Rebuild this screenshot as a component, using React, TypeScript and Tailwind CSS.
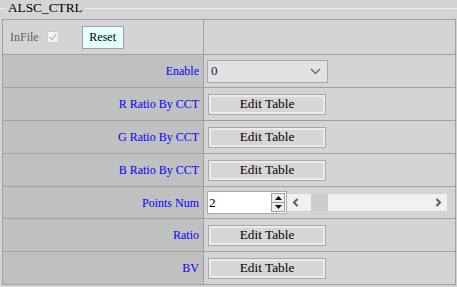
import React from "react";

const F = "font-['Liberation_Serif','Times_New_Roman',serif]";

function EditBtn() {
  return (
    <div className={`${F} w-[118px] h-[21px] border border-[#a9a9a9] bg-[#d6d6d6] shadow-[inset_0_0_0_2px_#ebebeb] flex items-center justify-center text-[13.3px] text-black leading-none`}>
      Edit Table
    </div>
  );
}

function Row({ label, h, children }: { label: string; h: string; children: React.ReactNode }) {
  return (
    <div className={`flex ${h}`}>
      <div className={`${F} w-[201px] shrink-0 border-r border-b border-[#a0a0a0] bg-[#c0c0c0] flex items-center justify-end pr-[4px] text-[12px] text-[#0000ff]`}>
        {label}
      </div>
      <div className="flex-1 border-r border-b border-[#a0a0a0] bg-[#d4d4d4] flex items-center pl-[4px]">
        {children}
      </div>
    </div>
  );
}

export default function App() {
  return (
    <div className={`${F} w-[457px] h-[287px] bg-[#d4d4d4] overflow-hidden`}>
      <div className="flex h-[19px] items-start">
        <div className="w-[6px] h-px mt-[8px] bg-[#ececec]" />
        <div className={`${F} px-[2px] text-[13.3px] leading-[16px] text-black`}>ALSC_CTRL</div>
        <div className="flex-1 h-px mt-[8px] bg-[#ececec]" />
      </div>
      <div className="ml-[2px] mr-[1px] border-l border-t border-[#a0a0a0]">
        <div className="flex h-[35px]">
          <div className="w-[201px] shrink-0 border-r border-b border-[#a0a0a0] bg-[#d4d4d4] flex items-center pl-[7px]">
            <span className={`${F} text-[12px] text-[#606060]`}>InFile</span>
            <span className="ml-[8px] w-[12px] h-[12px] border border-[#cfcfcf] bg-[#f4f4f4] flex items-center justify-center">
              <svg width="10" height="10" viewBox="0 0 10 10">
                <polyline points="1.5,5 4,7.5 8.5,2" fill="none" stroke="#b8b8b8" strokeWidth="1.3" />
              </svg>
            </span>
            <div className={`${F} ml-[23px] w-[42px] h-[23px] border border-[#a0a0a0] bg-[#e0ffff] shadow-[inset_0_0_0_1px_#f6f6f6] flex items-center justify-center text-[12px] text-black`}>
              Reset
            </div>
          </div>
          <div className="flex-1 border-r border-b border-[#a0a0a0] bg-[#d4d4d4]" />
        </div>
        <Row label="Enable" h="h-[33px]">
          <div className="-ml-[1px] w-[121px] h-[23px] border border-[#a8a8a8] bg-[#e2e2e2] flex items-center justify-between pl-[3px] pr-[6px]">
            <span className={`${F} text-[13px] text-[#1a1a40]`}>0</span>
            <svg width="11" height="7" viewBox="0 0 11 7">
              <polyline points="1,1 5.5,5.5 10,1" fill="none" stroke="#555" strokeWidth="1.1" />
            </svg>
          </div>
        </Row>
        <Row label="R Ratio By CCT" h="h-[33px]"><EditBtn /></Row>
        <Row label="G Ratio By CCT" h="h-[33px]"><EditBtn /></Row>
        <Row label="B Ratio By CCT" h="h-[33px]"><EditBtn /></Row>
        <Row label="Points Num" h="h-[32px]">
          <div className="-ml-[1px] flex items-center">
            <div className="w-[80px] h-[23px] border border-[#a9a9a9] bg-white flex items-center justify-between pl-[1px] pr-[1px]">
              <span className={`${F} text-[13.3px] text-black leading-none`}>2</span>
              <div className="flex flex-col w-[14px] h-[19px] border border-[#a0a0a0] bg-[#efefef]">
                <div className="flex-1 flex items-center justify-center border-b border-[#a0a0a0]">
                  <svg width="7" height="4" viewBox="0 0 7 4"><polygon points="0,4 3.5,0 7,4" fill="#111" /></svg>
                </div>
                <div className="flex-1 flex items-center justify-center">
                  <svg width="7" height="4" viewBox="0 0 7 4"><polygon points="0,0 3.5,4 7,0" fill="#111" /></svg>
                </div>
              </div>
            </div>
            <div className="w-[160px] h-[17px] bg-[#f0f0f0] flex items-center">
              <svg className="ml-[5px] shrink-0" width="7" height="9" viewBox="0 0 7 9">
                <polyline points="5.5,1 2,4.5 5.5,8" fill="none" stroke="#5a5a5a" strokeWidth="2" />
              </svg>
              <div className="ml-[12px] w-[17px] h-[17px] shrink-0 bg-[#cdcdcd]" />
              <div className="flex-1" />
              <svg className="mr-[5px] shrink-0" width="7" height="9" viewBox="0 0 7 9">
                <polyline points="1.5,1 5,4.5 1.5,8" fill="none" stroke="#5a5a5a" strokeWidth="2" />
              </svg>
            </div>
          </div>
        </Row>
        <Row label="Ratio" h="h-[33px]"><EditBtn /></Row>
        <Row label="BV" h="h-[33px]"><EditBtn /></Row>
      </div>
    </div>
  );
}
